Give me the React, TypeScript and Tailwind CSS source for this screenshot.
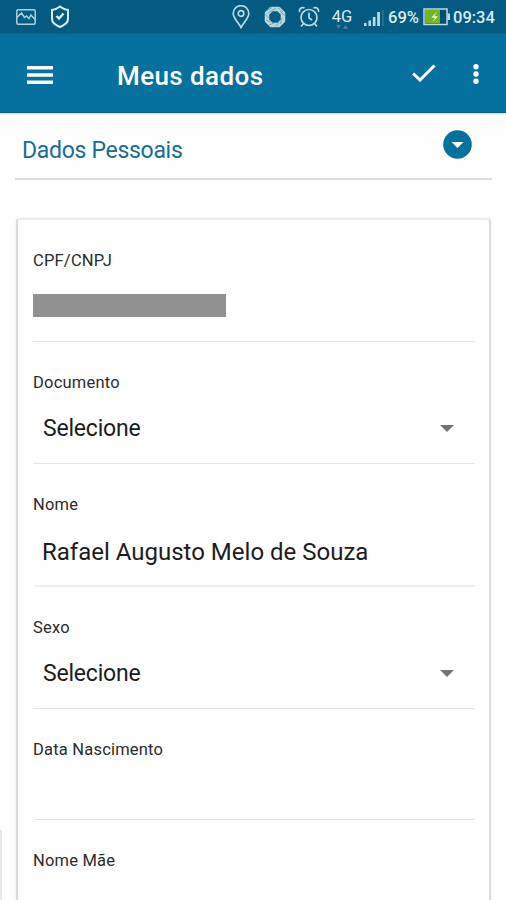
import type { ReactNode } from 'react';
import clsx from 'clsx';

interface FieldProps {
    label: string;
    className?: string;
    lineClass?: string;
    children?: ReactNode;
}

const Field = ({ label, className, lineClass, children }: FieldProps) => (
    <div className={clsx('flex flex-col pt-[31px]', className)}>
        <span className="h-5 text-[16.5px] leading-5 tracking-[0.2px] text-[#2b2b2b]">{label}</span>
        <div className="flex flex-1 items-center">{children}</div>
        <div className={clsx('mr-[14px]', lineClass || 'h-px bg-[#e4e4e4]')} />
    </div>
);

const Select = ({ value }: { value: string }) => (
    <div className="mt-0.5 flex w-full items-center justify-between pl-2.5 pr-[35px]">
        <span className="text-[23px] leading-7 tracking-[-0.2px] text-[#1c1c1c]">{value}</span>
        <svg className="mb-0.5" width="14" height="7" viewBox="0 0 14 7">
            <path d="M0 0h14L7 7z" fill="#757575" />
        </svg>
    </div>
);

const StatusBar = () => (
    <div className="flex h-[34px] items-center bg-[#045a80] text-[#d9edf2]">
        <svg className="ml-4" width="20" height="16" viewBox="0 0 20 16" fill="none" stroke="#a9d3dd" strokeWidth="1.5">
            <rect x="0.8" y="0.8" width="18.4" height="14.4" rx="1.5" />
            <path d="M1 8.500L5.500 4l3 4.500L10.500 7l2.500 2.500L15 6l4 4.500" />
        </svg>
        <svg className="ml-3.5" width="20" height="24" viewBox="0 0 20 24" fill="none" stroke="#d9f2f5">
            <path d="M10 1.500c2.500 2 5 3 8 3.500v9c0 3-3 6-8 8-5-2-8-5-8-8V5c3-.5 5.500-1.500 8-3.500z" strokeWidth="2" />
            <path d="M6.500 11l2.500 2.500 4.500-5" strokeWidth="2.300" />
        </svg>
        <svg className="ml-[162px]" width="18" height="24" viewBox="0 0 18 24" fill="none" stroke="#b5dce3" strokeWidth="1.7">
            <path d="M9 22.500C6 17 1.200 13 1.200 8.500a7.800 7.800 0 0 1 15.600 0C16.800 13 12 17 9 22.500z" />
            <circle cx="9" cy="8.500" r="2.800" />
        </svg>
        <svg className="ml-[13px]" width="24" height="24" viewBox="0 0 24 24" fill="none" stroke="#b5d8dc">
            <path d="M8.500 4h7l4.500 4.500v7L15.500 20h-7L4 15.500v-7z" strokeWidth="4.600" strokeLinejoin="round" />
            <path
                d="M4 5.500l5-3M5 8l8-5M15 3l5 4M17 6.500l5 4M18.500 13l-1 6M16 17l-3 4.500M11 18l-5 2M7.500 17L3 15M5.500 13L2 9"
                stroke="#6ba3b5"
                strokeWidth="0.9"
            />
        </svg>
        <svg className="ml-[11px]" width="22" height="22" viewBox="0 0 22 22" fill="none" stroke="#b9dce2" strokeWidth="1.700">
            <circle cx="11" cy="11.500" r="8" />
            <path d="M11 6.500v5.500l3 2M1.500 6C1 3 3 1 6.500 1.800M20.500 6C21 3 19 1 15.500 1.800M5.500 17.500l-2.500 3M16.500 17.500l2.500 3" />
        </svg>
        <div className="ml-[11px] flex w-[22px] flex-col items-center">
            <span className="mt-1 text-[16.500px] leading-[16px]">4G</span>
            <svg width="14" height="4" viewBox="0 0 14 4" fill="#3c86a5">
                <path d="M1 0h5L3.500 4zM8 4h5L10.500 0z" />
            </svg>
        </div>
        <svg className="ml-[11px] mt-[1px]" width="21" height="18" viewBox="0 0 21 18" fill="#b9dce2">
            <path d="M0 14h2.500v3H0zM4.500 11.500H7V17H4.500zM8.800 8h2.700v9H8.800zM13.200 3h2.700v14h-2.700z" />
            <path d="M18.300 1h1.200v16h-1.200z" fill="#397e9a" />
        </svg>
        <span className="ml-[3px] w-[33px] whitespace-nowrap pt-0.5 text-[16.500px] font-medium leading-5">69%</span>
        <svg className="ml-[2px]" width="27" height="18" viewBox="0 0 27 18">
            <rect x="1" y="1" width="23" height="15.500" fill="#064b75" stroke="#b9dce2" strokeWidth="1.500" />
            <path d="M2 2h15v13.500H2z" fill="#72b622" />
            <path d="M24.500 5.500H27v6.500h-2.500z" fill="#b9dce2" />
            <path d="M14 3.500L8.500 9.500l3.500.5-3 4.500 6-6-3.500-.5z" fill="#e6f6ce" />
        </svg>
        <span className="ml-[3px] pt-0.5 text-[16.500px] font-medium leading-5">09:34</span>
    </div>
);

const App = () => (
    <div className="h-[900px] w-[506px] overflow-hidden bg-[#fefefe] font-['Roboto',sans-serif]">
        <StatusBar />
        <header className="flex h-[79px] items-center border-b border-[#045f8e] bg-[#06709f] pt-[3px] text-white shadow-[0_1px_2px_#bcd8eb]">
            <svg className="ml-[27px]" width="26" height="18" viewBox="0 0 26 18" fill="currentColor">
                <path d="M0 0h26v3.500H0zM0 7.200h26v3.600H0zM0 14.500h26V18H0z" />
            </svg>
            <h1 className="ml-[64px] flex-1 pt-0.5 text-[26px] font-medium leading-8 tracking-[0.4px]">Meus dados</h1>
            <svg className="-mt-1" width="24" height="18" viewBox="0 0 24 18" fill="none" stroke="currentColor" strokeWidth="3">
                <path d="M1.200 9.500L8 16 22.500 1.500" />
            </svg>
            <svg className="-mt-0.5 ml-[37px] mr-[27px]" width="6" height="20" viewBox="0 0 6 20" fill="currentColor">
                <circle cx="3" cy="2.700" r="2.700" />
                <circle cx="3" cy="10" r="2.700" />
                <circle cx="3" cy="17.300" r="2.700" />
            </svg>
        </header>

        <section className="mx-[15px] mr-[14px] flex h-[67px] justify-between border-b-2 border-[#dcdcdc] pl-[7px] pr-5">
            <h2 className="mt-[24px] text-[23px] leading-7 tracking-[-0.3px] text-[#176d96]">Dados Pessoais</h2>
            <svg className="mt-[17px]" width="29" height="29" viewBox="0 0 29 29">
                <circle cx="14.500" cy="14.500" r="14.300" fill="#06709f" />
                <path d="M8.500 12h12l-6 6z" fill="#fff" />
            </svg>
        </section>

        {/* card runs past the bottom of the screen */}
        <main className="ml-4 mr-[15px] mt-[38px] h-[720px] rounded-[4px] border-2 border-t-[#ececec] border-x-[#dcdcdc] bg-white pl-[15px] shadow-[0_0_2px_#e6e6e6]">
            <Field label="CPF/CNPJ" className="h-[122px]">
                <div className="mb-0.5 h-[23px] w-[193px] bg-[#919191]" />
            </Field>
            <Field label="Documento" className="h-[122px]">
                <Select value="Selecione" />
            </Field>
            <Field label="Nome" className="h-[123px]" lineClass="h-0.5 ml-0.5 bg-[#eeeeee]">
                <span className="pl-[9px] pt-[3px] text-[24px] leading-7 text-[#1c1c1c]">Rafael Augusto Melo de Souza</span>
            </Field>
            <Field label="Sexo" className="h-[122px]">
                <Select value="Selecione" />
            </Field>
            <Field label="Data Nascimento" className="h-[111px]" lineClass="h-px ml-0.5 bg-[#e4e4e4]" />
            <Field label="Nome Mãe" className="h-[122px]" />
        </main>
        <div className="fixed bottom-0 left-0 h-[70px] w-0.5 bg-[#e6e6e6]" />
    </div>
);

export default App;
